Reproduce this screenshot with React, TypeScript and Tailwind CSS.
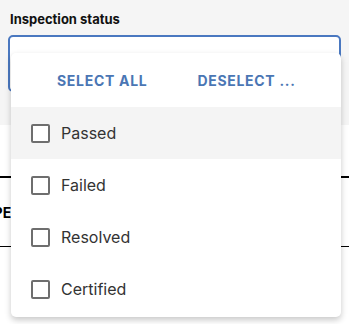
import { useState } from 'react';

const OPTIONS = ['Passed', 'Failed', 'Resolved', 'Certified'];

function Checkbox({ checked }: { checked: boolean }) {
  return (
    <span
      className={`w-[19px] h-[19px] shrink-0 rounded-[2px] border-2 ${
        checked ? 'border-[#4a78bd] bg-[#4a78bd]' : 'border-[#6e6e6e] bg-white'
      }`}
    />
  );
}

export default function App() {
  const [selected, setSelected] = useState<string[]>([]);
  const toggle = (o: string) =>
    setSelected((s) => (s.includes(o) ? s.filter((x) => x !== o) : [...s, o]));

  return (
    <div className="relative w-[349px] h-[324px] overflow-hidden bg-white font-['Inter',sans-serif]">
      {/* filter field */}
      <div className="bg-[#f5f5f5] px-2 pt-[10px] h-[125px]">
        <div className="pl-[2px] text-[13px] leading-[18px] font-bold text-[#111]">Inspection status</div>
        <div className="mt-[7px] h-[57px] rounded-[5px] border-2 border-[#4a78c0] bg-white" />
      </div>

      {/* table behind */}
      <div className="mt-[51px] border-t-2 border-black">
        <div className="h-[69px] flex items-center border-b border-black">
          <span className="-ml-[27px] text-[14px] font-bold text-black tracking-wide">TYPE</span>
        </div>
      </div>

      {/* dropdown */}
      <div className="absolute left-[11px] top-[53px] w-[330px] rounded-[5px] bg-white shadow-[0_3px_6px_rgba(0,0,0,0.22)] pb-[2px]">
        <div className="h-[54px] flex items-center pl-[46px] gap-[50px] text-[14px] font-bold text-[#4a76b4] tracking-[0.05em]">
          <button onClick={() => setSelected(OPTIONS)}>SELECT ALL</button>
          <button onClick={() => setSelected([])}>DESELECT ...</button>
        </div>
        {OPTIONS.map((o, i) => (
          <div
            key={o}
            onClick={() => toggle(o)}
            className={`h-[52px] flex items-center gap-[11px] pl-[20px] cursor-pointer ${
              i === 0 ? 'bg-[#f4f4f4]' : ''
            }`}
          >
            <Checkbox checked={selected.includes(o)} />
            <span className="text-[16px] text-[#333]">{o}</span>
          </div>
        ))}
      </div>
    </div>
  );
}
